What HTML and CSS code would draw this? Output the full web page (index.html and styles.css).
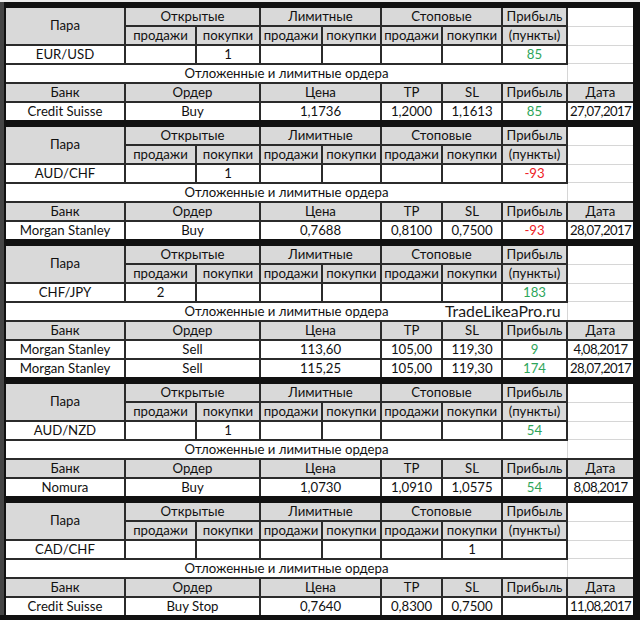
FILE: index.html
```html
<!DOCTYPE html>
<html lang="ru">
<head>
<meta charset="utf-8">
<title>Отложенные и лимитные ордера</title>
<link rel="stylesheet" href="styles.css">
</head>
<body>
<div class="top-strip"></div>
<div class="sheet">

<div class="blk">
  <div class="h pair">Пара</div><div class="h s2">Открытые</div><div class="h s2">Лимитные</div><div class="h s2">Стоповые</div><div class="h">Прибыль</div>
  <div class="ghost"><i></i><i></i><i></i><i></i></div>
  <div class="h">продажи</div><div class="h">покупки</div><div class="h">продажи</div><div class="h">покупки</div><div class="h">продажи</div><div class="h">покупки</div><div class="h">(пункты)</div>
  <div class="c">EUR/USD</div><div class="c"></div><div class="c">1</div><div class="c"></div><div class="c"></div><div class="c"></div><div class="c"></div><div class="c pos">85</div>
  <div class="c pend">Отложенные и лимитные ордера</div>
  <div class="h">Банк</div><div class="h s2">Ордер</div><div class="h s2">Цена</div><div class="h">TP</div><div class="h">SL</div><div class="h">Прибыль</div><div class="h">Дата</div>
  <div class="c">Credit Suisse</div><div class="c s2">Buy</div><div class="c s2">1,1736</div><div class="c">1,2000</div><div class="c">1,1613</div><div class="c pos">85</div><div class="c d">27,07,2017</div>
</div>

<div class="blk">
  <div class="h pair">Пара</div><div class="h s2">Открытые</div><div class="h s2">Лимитные</div><div class="h s2">Стоповые</div><div class="h">Прибыль</div>
  <div class="ghost"><i></i><i></i><i></i><i></i></div>
  <div class="h">продажи</div><div class="h">покупки</div><div class="h">продажи</div><div class="h">покупки</div><div class="h">продажи</div><div class="h">покупки</div><div class="h">(пункты)</div>
  <div class="c">AUD/CHF</div><div class="c"></div><div class="c">1</div><div class="c"></div><div class="c"></div><div class="c"></div><div class="c"></div><div class="c neg">-93</div>
  <div class="c pend">Отложенные и лимитные ордера</div>
  <div class="h">Банк</div><div class="h s2">Ордер</div><div class="h s2">Цена</div><div class="h">TP</div><div class="h">SL</div><div class="h">Прибыль</div><div class="h">Дата</div>
  <div class="c">Morgan Stanley</div><div class="c s2">Buy</div><div class="c s2">0,7688</div><div class="c">0,8100</div><div class="c">0,7500</div><div class="c neg">-93</div><div class="c d">28,07,2017</div>
</div>

<div class="blk">
  <div class="h pair">Пара</div><div class="h s2">Открытые</div><div class="h s2">Лимитные</div><div class="h s2">Стоповые</div><div class="h">Прибыль</div>
  <div class="ghost"><i></i><i></i><i></i><i></i></div>
  <div class="h">продажи</div><div class="h">покупки</div><div class="h">продажи</div><div class="h">покупки</div><div class="h">продажи</div><div class="h">покупки</div><div class="h">(пункты)</div>
  <div class="c">CHF/JPY</div><div class="c">2</div><div class="c"></div><div class="c"></div><div class="c"></div><div class="c"></div><div class="c"></div><div class="c pos">183</div>
  <div class="c pend wm-host">Отложенные и лимитные ордера<span class="watermark">TradeLikeaPro.ru</span></div>
  <div class="h">Банк</div><div class="h s2">Ордер</div><div class="h s2">Цена</div><div class="h">TP</div><div class="h">SL</div><div class="h">Прибыль</div><div class="h">Дата</div>
  <div class="c">Morgan Stanley</div><div class="c s2">Sell</div><div class="c s2">113,60</div><div class="c">105,00</div><div class="c">119,30</div><div class="c pos">9</div><div class="c d">4,08,2017</div>
  <div class="c">Morgan Stanley</div><div class="c s2">Sell</div><div class="c s2">115,25</div><div class="c">105,00</div><div class="c">119,30</div><div class="c pos">174</div><div class="c d">28,07,2017</div>
</div>

<div class="blk">
  <div class="h pair">Пара</div><div class="h s2">Открытые</div><div class="h s2">Лимитные</div><div class="h s2">Стоповые</div><div class="h">Прибыль</div>
  <div class="ghost"><i></i><i></i><i></i><i></i></div>
  <div class="h">продажи</div><div class="h">покупки</div><div class="h">продажи</div><div class="h">покупки</div><div class="h">продажи</div><div class="h">покупки</div><div class="h">(пункты)</div>
  <div class="c">AUD/NZD</div><div class="c"></div><div class="c">1</div><div class="c"></div><div class="c"></div><div class="c"></div><div class="c"></div><div class="c pos">54</div>
  <div class="c pend">Отложенные и лимитные ордера</div>
  <div class="h">Банк</div><div class="h s2">Ордер</div><div class="h s2">Цена</div><div class="h">TP</div><div class="h">SL</div><div class="h">Прибыль</div><div class="h">Дата</div>
  <div class="c">Nomura</div><div class="c s2">Buy</div><div class="c s2">1,0730</div><div class="c">1,0910</div><div class="c">1,0575</div><div class="c pos">54</div><div class="c d">8,08,2017</div>
</div>

<div class="blk">
  <div class="h pair">Пара</div><div class="h s2">Открытые</div><div class="h s2">Лимитные</div><div class="h s2">Стоповые</div><div class="h">Прибыль</div>
  <div class="ghost"><i></i><i></i><i></i><i></i></div>
  <div class="h">продажи</div><div class="h">покупки</div><div class="h">продажи</div><div class="h">покупки</div><div class="h">продажи</div><div class="h">покупки</div><div class="h">(пункты)</div>
  <div class="c">CAD/CHF</div><div class="c"></div><div class="c"></div><div class="c"></div><div class="c"></div><div class="c"></div><div class="c">1</div><div class="c"></div>
  <div class="c pend">Отложенные и лимитные ордера</div>
  <div class="h">Банк</div><div class="h s2">Ордер</div><div class="h s2">Цена</div><div class="h">TP</div><div class="h">SL</div><div class="h">Прибыль</div><div class="h">Дата</div>
  <div class="c">Credit Suisse</div><div class="c s2">Buy Stop</div><div class="c s2">0,7640</div><div class="c">0,8300</div><div class="c">0,7500</div><div class="c"></div><div class="c d">11,08,2017</div>
</div>

</div>
</body>
</html>
```

FILE: styles.css
```css
html, body {
  margin: 0;
  padding: 0;
  background: #111111;
}

body {
  width: 640px;
  height: 620px;
  overflow: hidden;
  font-family: Lato, "Liberation Sans", sans-serif;
  font-size: 13.2px;
  color: #111111;
}

.top-strip {
  height: 2px;
  background: #ebebeb;
}

.sheet {
  display: flex;
  flex-direction: column;
  gap: 7px;
  padding: 6px 0 0 2px;
  border-left: 4px solid #454545;
}

.blk {
  display: grid;
  grid-template-columns: 118px 69px 62px 60px 57px 59px 58px 63px 65px;
  grid-auto-rows: 17px;
  gap: 2px;
  width: 627px;
  background: #2b2b2b;
}

.c,
.h {
  display: flex;
  align-items: center;
  justify-content: center;
  white-space: nowrap;
  line-height: 1;
  background: #ffffff;
}

.h {
  background: #d9d9d9;
}

.s2 {
  grid-column: span 2;
}

.pair {
  grid-row: span 2;
}

.pend {
  grid-column: 1 / span 8;
  margin-right: -2px;
  border-right: 1px solid #d6d6d6;
}

.ghost {
  grid-column: 9;
  grid-row: 1 / span 4;
  display: grid;
  grid-template-rows: repeat(4, 1fr);
  gap: 1px;
  background: #d6d6d6;
}

.ghost i {
  background: #ffffff;
}

.d {
  letter-spacing: -0.6px;
}

.pos { color: #2ea55a; }
.neg { color: #ee1c25; }

.wm-host {
  position: relative;
}

.watermark {
  position: absolute;
  left: 439px;
  top: 0;
  font-size: 15.8px;
  letter-spacing: 0;
  color: #1a1a1a;
}
```
